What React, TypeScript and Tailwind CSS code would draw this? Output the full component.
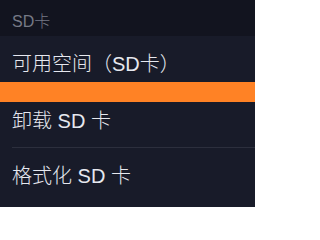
const font = "font-['Liberation_Sans','Noto_Sans_CJK_SC',sans-serif]";

export default function App() {
  return (
    <div className={`h-[207px] w-[255px] overflow-hidden bg-[#181b29] ${font}`}>
      {/* section header */}
      <div className="flex h-[36px] items-center bg-[#12141f] px-3 pt-[8px]">
        <span className="text-[16px] font-light leading-none text-[#767a86]">SD卡</span>
      </div>

      <div className="flex h-[46px] items-center px-3 pt-[10px]">
        <span className="text-[20px] font-light leading-none text-[#e6e8ef]">可用空间（SD卡）</span>
      </div>

      {/* usage bar */}
      <div className="h-[20px] bg-[#ff8225]" />

      <div className="flex h-[45px] items-center px-3 pb-[8px]">
        <span className="text-[20px] font-light leading-none text-[#e6e8ef]">卸载 SD 卡</span>
      </div>
      <div className="ml-3 h-px bg-[#2c2f3d]" />

      <div className="flex h-[58px] items-center px-3 pb-[3px]">
        <span className="text-[20px] font-light leading-none text-[#e6e8ef]">格式化 SD 卡</span>
      </div>
    </div>
  );
}
